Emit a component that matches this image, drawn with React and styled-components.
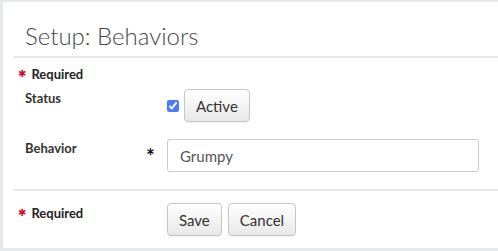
import React from "react";
import styled, { createGlobalStyle } from "styled-components";

const GlobalStyle = createGlobalStyle`
  html, body {
    margin: 0;
    padding: 0;
    background: #e6eaed;
    font-family: Lato, "Open Sans", Arial, sans-serif;
    color: #333;
  }
`;

const Page = styled.div`
  width: 498px;
  height: 251px;
  padding: 2px 0 0 3px;
  box-sizing: border-box;
  overflow: hidden;
`;

const Panel = styled.div`
  background: #fff;
  height: 246px;
  padding-left: 10px;
  box-sizing: border-box;
`;

const Header = styled.div`
  height: 48px;
  border-bottom: 2px solid #e4e8ec;
  display: flex;
  align-items: flex-end;
  padding: 0 0 6px 12px;
  box-sizing: content-box;
`;

const Title = styled.h1`
  margin: 0;
  font-size: 24px;
  font-weight: 300;
  line-height: 28px;
  color: #484848;
`;

const Required = styled.div`
  display: flex;
  align-items: center;
  align-self: start;
  gap: 5px;
  padding-left: 5px;
  font-size: 13px;
  font-weight: 700;
  line-height: ${(p) => p.$lh || 16}px;
  color: #222;
`;

const RedStar = styled.span`
  color: #c8102e;
  font-family: "DejaVu Sans", sans-serif;
  font-size: 10px;
  line-height: 10px;
`;

const TopRequired = styled(Required)`
  padding-top: 8px;
`;

const Form = styled.div`
  display: grid;
  grid-template-columns: 137px 17px 1fr;
  row-gap: 17px;
  padding: 7px 19px 17px 0;
  border-bottom: 2px solid #e4e8ec;
`;

const Label = styled.div`
  padding-left: 12px;
  font-size: 13px;
  font-weight: 700;
  line-height: 18px;
  color: #333;
`;

const Star = styled.div`
  font-size: 21px;
  font-weight: 700;
  line-height: 18px;
  padding-top: 8px;
  margin-left: -4px;
  color: #111;
`;

const Control = styled.div`
  display: flex;
  align-items: center;
  gap: 4px;
`;

const Check = styled.input`
  width: 12px;
  height: 12px;
  margin: 0 1px 0 0;
  accent-color: #4a7df2;
`;

const Button = styled.button`
  height: 33px;
  padding: 0 11px;
  font-family: Lato, "Open Sans", Arial, sans-serif;
  font-size: 15px;
  color: #333;
  background: linear-gradient(#ffffff, #e8e8e8);
  border: 1px solid #c6c6c6;
  border-radius: 4px;
  box-shadow: 0 1px 1px rgba(0, 0, 0, 0.06);
`;

const Input = styled.input`
  width: 100%;
  height: 33px;
  box-sizing: border-box;
  padding: 0 12px;
  font-family: Lato, "Open Sans", Arial, sans-serif;
  font-size: 15px;
  color: #555;
  border: 1px solid #cccccc;
  border-radius: 3px;
  outline: none;
`;

const Footer = styled.div`
  display: grid;
  grid-template-columns: 154px auto;
  padding-top: 12px;
`;

const FooterButtons = styled.div`
  display: flex;
  gap: 6px;
`;

export default function App() {
  return (
    <>
      <GlobalStyle />
      <Page>
        <Panel>
          <Header>
            <Title>Setup: Behaviors</Title>
          </Header>
          <TopRequired>
            <RedStar>✱</RedStar> Required
          </TopRequired>
          <Form>
            <Label>Status</Label>
            <div />
            <Control>
              <Check type="checkbox" defaultChecked />
              <Button>Active</Button>
            </Control>
            <Label>Behavior</Label>
            <Star>*</Star>
            <Control>
              <Input defaultValue="Grumpy" />
            </Control>
          </Form>
          <Footer>
            <Required $lh={20}>
              <RedStar>✱</RedStar> Required
            </Required>
            <FooterButtons>
              <Button>Save</Button>
              <Button>Cancel</Button>
            </FooterButtons>
          </Footer>
        </Panel>
      </Page>
    </>
  );
}
